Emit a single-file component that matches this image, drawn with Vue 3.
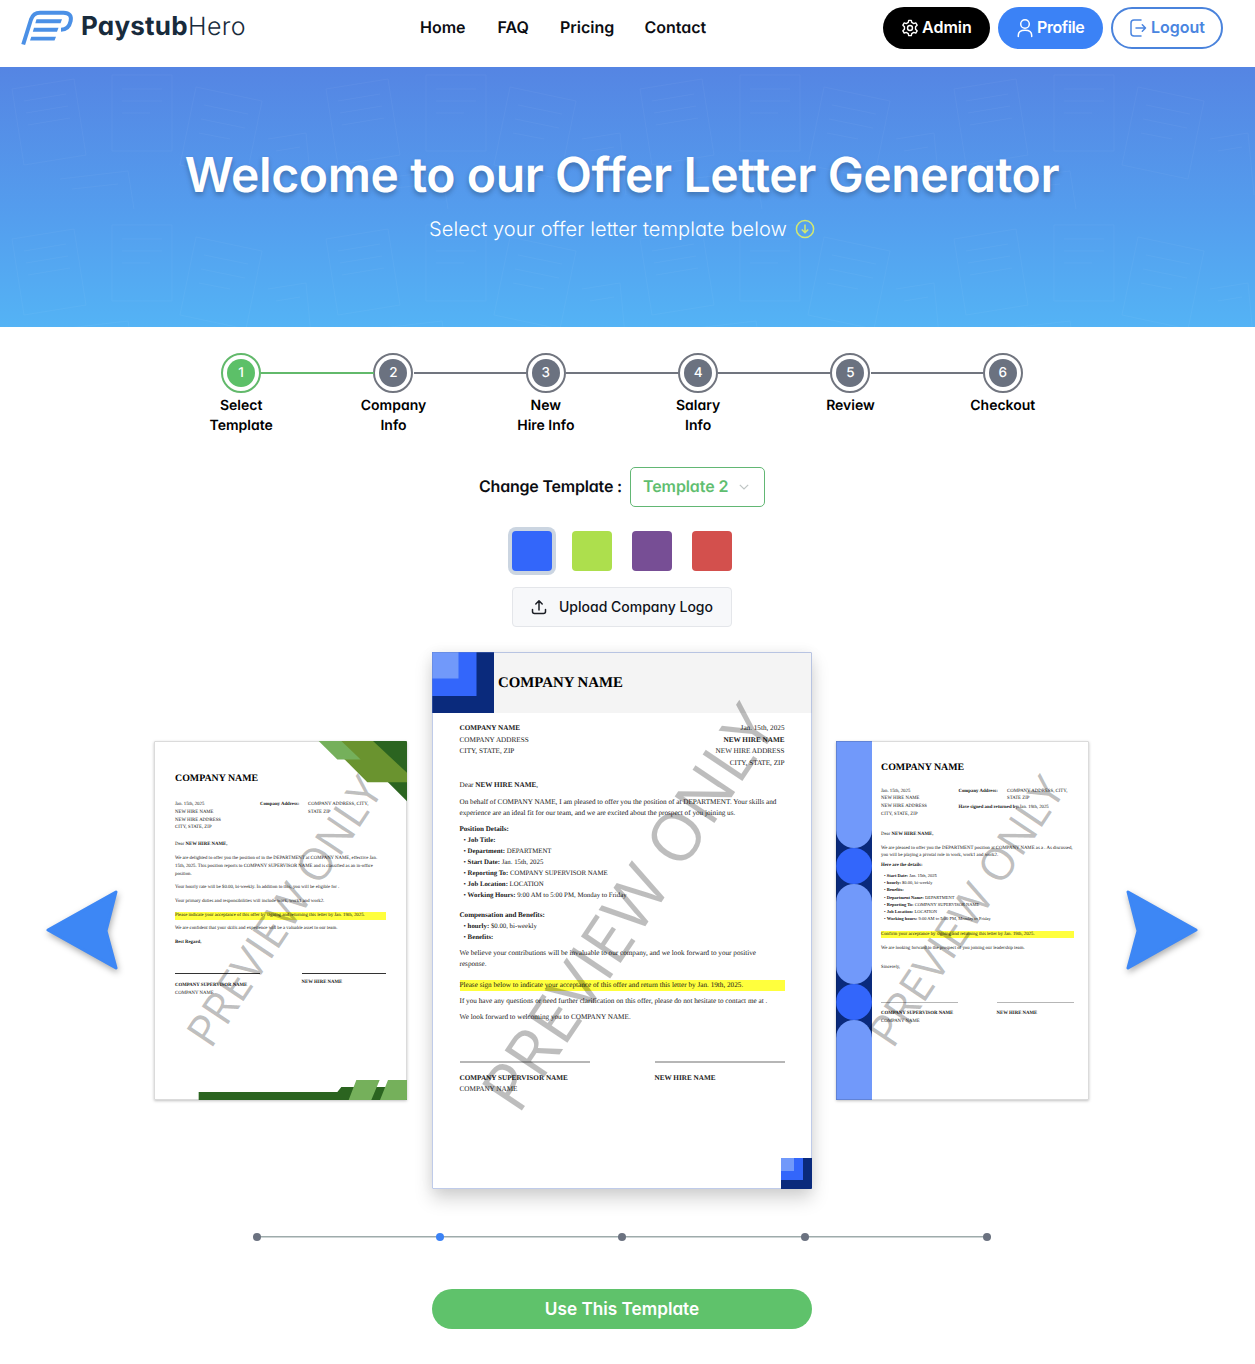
<script setup>
const nav = ['Home', 'FAQ', 'Pricing', 'Contact']
const steps = [['Select', 'Template'], ['Company', 'Info'], ['New', 'Hire Info'], ['Salary', 'Info'], ['Review'], ['Checkout']]
const swatches = ['blue', 'lime', 'purple', 'red']
const position = [
  ['Job Title:', ''],
  ['Department:', 'DEPARTMENT'],
  ['Start Date:', 'Jan. 15th, 2025'],
  ['Reporting To:', 'COMPANY SUPERVISOR NAME'],
  ['Job Location:', 'LOCATION'],
  ['Working Hours:', '9:00 AM to 5:00 PM, Monday to Friday'],
]
const benefits = [['hourly:', '$0.00, bi-weekly'], ['Benefits:', '']]
const details = [
  ['Start Date:', 'Jan. 15th, 2025'],
  ['hourly:', '$0.00, bi-weekly'],
  ['Benefits:', ''],
  ['Department Name:', 'DEPARTMENT'],
  ['Reporting To:', 'COMPANY SUPERVISOR NAME'],
  ['Job Location:', 'LOCATION'],
  ['Working hours:', '9:00 AM to 5:00 PM, Monday to Friday'],
]
</script>

<template>
  <div class="page">
    <header class="header">
      <div class="logo">
        <svg width="53" height="36" viewBox="0 0 53 36" fill="none" stroke="#4b90e6">
          <path d="M2.2 34.5 10 9.5Q12.3 2.7 19 2.7H42.5C48.5 2.7 50.8 6 49.6 11.2 48.5 16.500 45.500 19.800 40 19.800" stroke-width="4" />
          <path d="M15.500 9.300H41L39.500 13.300H14.300ZM13 17.800H37.500L36 21.800H11.800ZM10.300 26.800H35L33.500 30.500H9Z" fill="#4b90e6" stroke="none" />
        </svg>
        <span class="wordmark"><b>Paystub</b><i>Hero</i></span>
      </div>
      <nav class="nav"><a v-for="n in nav" :key="n" :class="n.toLowerCase()">{{ n }}</a></nav>
      <div class="account">
        <button class="pill admin">
          <svg width="18" height="18" viewBox="0 0 24 24" fill="none" stroke="currentColor" stroke-width="1.900" stroke-linejoin="round">
            <path d="M9.700 4.500 10.300 1.800H13.700L14.300 4.500 17 6.100 19.700 5.200 21.500 8.200 19.400 10.300V13.700L21.500 15.800 19.700 18.800 17 17.900 14.300 19.500 13.700 22.200H10.300L9.700 19.500 7 17.900 4.300 18.800 2.500 15.800 4.600 13.700V10.300L2.500 8.200 4.300 5.200 7 6.100Z" /><circle cx="12" cy="12" r="3.300" />
          </svg><span>Admin</span>
        </button>
        <button class="pill profile">
          <svg width="18" height="20" viewBox="0 0 18 20" fill="none" stroke="currentColor" stroke-width="1.500" stroke-linecap="round">
            <circle cx="9" cy="6" r="4.300" /><path d="M2.300 18.500V17.300C2.300 14 4.500 12.300 9 12.300S15.700 14 15.700 17.300V18.500" />
          </svg><span>Profile</span>
        </button>
        <button class="pill logout">
          <svg width="18" height="20" viewBox="0 0 18 20" fill="none" stroke="currentColor" stroke-width="1.500" stroke-linecap="round" stroke-linejoin="round">
            <path d="M12 2H5Q2 2 2 5V15Q2 18 5 18H12M7 10H16.500M13.300 6.800 16.500 10 13.300 13.200" />
          </svg><span>Logout</span>
        </button>
      </div>
    </header>

    <section class="hero">
      <svg class="papers" width="1255" height="260" fill="none" stroke="#fff">
        <defs>
          <pattern id="sheets" width="314" height="150" patternUnits="userSpaceOnUse">
            <path d="M12 22 74 12 86 88 24 98ZM24 34 66 27M26 46 68 39M28 58 70 51M112 8H172V84H112ZM122 22H162M122 34H162M122 46H150M196 20 262 34 246 112 180 98ZM204 38 248 47M201 52 245 61M199 66 230 72M60 112 128 104 134 142M72 122 118 117M268 72 306 66 312 128M276 84 300 80" />
          </pattern>
        </defs>
        <rect width="1255" height="260" fill="url(#sheets)" stroke="none" />
      </svg>
      <h1>Welcome to our Offer Letter Generator</h1>
      <p><span>Select your offer letter template below</span>
        <svg width="20" height="20" viewBox="0 0 20 20" fill="none" stroke="#d3e870" stroke-width="1.500">
          <circle cx="10" cy="10" r="8.600" /><path d="M10 5.500V13.500M6.800 10.500 10 13.700 13.200 10.500" />
        </svg>
      </p>
    </section>

    <main class="content">
      <ol class="steps">
        <li v-for="(s, i) in steps" :key="i" :class="{ active: i === 0 }">
          <div class="ring"><span>{{ i + 1 }}</span></div>
          <div v-for="w in s" :key="w" class="label">{{ w }}</div>
        </li>
      </ol>

      <div class="chooser">
        <span class="chooser-label">Change Template :</span>
        <div class="select"><span>Template 2</span>
          <svg width="10" height="6" viewBox="0 0 10 6" fill="none" stroke="#bfc5c4" stroke-width="1.200"><path d="M.8.8 5 5 9.200.8" /></svg>
        </div>
      </div>

      <div class="swatches"><i v-for="(c, i) in swatches" :key="c" :class="[c, { selected: i === 0 }]"></i></div>

      <button class="upload">
        <svg width="16" height="16" viewBox="0 0 16 16" fill="none" stroke="#1c1f26" stroke-width="1.500" stroke-linecap="round" stroke-linejoin="round">
          <path d="M8 11V2M4.800 5 8 1.800 11.200 5M1.500 10.500V12.500Q1.500 14.500 3.500 14.500H12.500Q14.500 14.500 14.500 12.500V10.500" />
        </svg><span>Upload Company Logo</span>
      </button>

      <div class="carousel">
        <svg class="arrow prev" width="72" height="80" viewBox="0 0 72 80"><path d="M2 40 70 2 60 41 70 78Z" fill="#3d87f5" stroke="#3d87f5" stroke-width="3" stroke-linejoin="round" /></svg>

        <article class="letter side green">
          <svg class="decor" viewBox="0 0 759 1072" preserveAspectRatio="none">
            <path d="M560 0H759V180L702 123Z" fill="#2b6420" />
            <path d="M560 0H657L759 95V123H640L572 55Z" fill="#6a932f" />
            <path d="M494 0H562L620 55H550Z" fill="#75b05b" />
            <path d="M134 1048H550L562 1033H759V1072H134Z" fill="#2b6420" />
            <path d="M607 1012H677L652 1072H584ZM702 1012H759V1072H678Z" fill="#75b05b" />
          </svg>
          <h2>COMPANY NAME</h2>
          <div class="info">
            <div class="who">Jan. 15th, 2025<br>NEW HIRE NAME<br>NEW HIRE ADDRESS<br>CITY, STATE, ZIP</div>
            <b class="key">Company Address:</b>
            <div class="value">COMPANY ADDRESS, CITY,<br>STATE ZIP</div>
          </div>
          <p class="dear">Dear <b>NEW HIRE NAME,</b></p>
          <p class="intro">We are delighted to offer you the position of in the DEPARTMENT at COMPANY NAME, effective Jan.<br>15th, 2025. This position reports to COMPANY SUPERVISOR NAME and is classified as an in-office<br>position.</p>
          <p>Your hourly rate will be $0.00, bi-weekly. In addition to this, you will be eligible for .</p>
          <p>Your primary duties and responsibilities will include work, work1 and work2.</p>
          <p class="mark">Please indicate your acceptance of this offer by signing and returning this letter by Jan. 19th, 2025.</p>
          <p>We are confident that your skills and experience will be a valuable asset to our team.</p>
          <p><b>Best Regard,</b></p>
          <div class="signs">
            <div><b>COMPANY SUPERVISOR NAME</b><span>COMPANY NAME</span></div>
            <div><b>NEW HIRE NAME</b></div>
          </div>
          <div class="watermark">PREVIEW ONLY</div>
        </article>

        <article class="letter main">
          <div class="band">
            <svg width="62" height="61" viewBox="0 0 62 61"><path d="M0 0H62V61H0Z" fill="#0a2a7c" /><path d="M0 0H44.500V44H0Z" fill="#3366fb" /><path d="M0 0H26.500V26.500H0Z" fill="#7199fa" /></svg>
            <h2>COMPANY NAME</h2>
          </div>
          <div class="body">
            <div class="parties">
              <div><b>COMPANY NAME</b><br>COMPANY ADDRESS<br>CITY, STATE, ZIP</div>
              <div class="to">Jan. 15th, 2025<br><b>NEW HIRE NAME</b><br>NEW HIRE ADDRESS<br>CITY, STATE, ZIP</div>
            </div>
            <p class="dear">Dear <b>NEW HIRE NAME</b>,</p>
            <p class="intro">On behalf of COMPANY NAME, I am pleased to offer you the position of at DEPARTMENT. Your skills and<br>experience are an ideal fit for our team, and we are excited about the prospect of you joining us.</p>
            <h3>Position Details:</h3>
            <ul><li v-for="d in position" :key="d[0]">• <b>{{ d[0] }}</b> {{ d[1] }}</li></ul>
            <h3 class="comp">Compensation and Benefits:</h3>
            <ul><li v-for="d in benefits" :key="d[0]">• <b>{{ d[0] }}</b> {{ d[1] }}</li></ul>
            <p class="believe">We believe your contributions will be invaluable to our company, and we look forward to your positive<br>response.</p>
            <p class="mark">Please sign below to indicate your acceptance of this offer and return this letter by Jan. 19th, 2025.</p>
            <p>If you have any questions or need further clarification on this offer, please do not hesitate to contact me at .</p>
            <p>We look forward to welcoming you to COMPANY NAME.</p>
            <div class="signs">
              <div><b>COMPANY SUPERVISOR NAME</b><span>COMPANY NAME</span></div>
              <div><b>NEW HIRE NAME</b></div>
            </div>
          </div>
          <svg class="corner" width="31" height="31" viewBox="0 0 31 31"><path d="M0 0H31V31H0Z" fill="#0a2a7c" /><path d="M0 0H22V22H0Z" fill="#3366fb" /><path d="M0 0H13V13H0Z" fill="#7199fa" /></svg>
          <div class="watermark">PREVIEW ONLY</div>
        </article>

        <article class="letter side strip">
          <div class="ribbon"><i class="first"></i><i class="dot"></i><i class="middle"></i><i class="dot"></i><i class="last"></i></div>
          <div class="body">
            <h2>COMPANY NAME</h2>
            <div class="info">
              <div class="who">Jan. 15th, 2025<br>NEW HIRE NAME<br>NEW HIRE ADDRESS<br>CITY, STATE, ZIP</div>
              <div class="meta">
                <div class="pair"><b class="key">Company Address:</b><div>COMPANY ADDRESS, CITY,<br>STATE ZIP</div></div>
                <div class="signed"><b>Have signed and returned by:</b>Jan. 19th, 2025</div>
              </div>
            </div>
            <p class="dear">Dear <b>NEW HIRE NAME,</b></p>
            <p class="intro">We are pleased to offer you the DEPARTMENT position at COMPANY NAME as a . As discussed,<br>you will be playing a pivotal role in work, work1 and work2.</p>
            <p class="here"><b>Here are the details:</b></p>
            <ul><li v-for="d in details" :key="d[0]">• <b>{{ d[0] }}</b> {{ d[1] }}</li></ul>
            <p class="mark">Confirm your acceptance by signing and returning this letter by Jan. 19th, 2025.</p>
            <p class="look">We are looking forward to the prospect of you joining our leadership team.</p>
            <p class="sincerely">Sincerely,</p>
            <div class="signs">
              <div><b>COMPANY SUPERVISOR NAME</b><span>COMPANY NAME</span></div>
              <div><b>NEW HIRE NAME</b></div>
            </div>
          </div>
          <div class="watermark">PREVIEW ONLY</div>
        </article>

        <svg class="arrow next" width="72" height="80" viewBox="0 0 72 80"><path d="M70 40 2 2 12 41 2 78Z" fill="#3d87f5" stroke="#3d87f5" stroke-width="3" stroke-linejoin="round" /></svg>
      </div>

      <div class="track"><i v-for="n in 5" :key="n" :class="{ current: n === 2 }"></i></div>
      <button class="use">Use This Template</button>
    </main>
  </div>
</template>

<style>
body { margin: 0; background: #fff; }
</style>

<style scoped>
* { box-sizing: border-box; }
.page { width: 1255px; height: 1364px; overflow: hidden; background: #fff; color: #0b0d12; font-family: Inter, "Open Sans", sans-serif; font-feature-settings: "cv11" 1; text-rendering: geometricPrecision; }
button { font: inherit; border: 0; padding: 0; margin: 0; font-feature-settings: inherit; white-space: nowrap; }
h1, h2, h3, p, ul, ol { margin: 0; padding: 0; list-style: none; }
svg { display: block; flex: none; }

.header { height: 67px; display: flex; align-items: flex-start; }
.logo { display: flex; width: 420px; padding: 10px 0 0 21px; }
.wordmark { display: flex; margin-left: 7px; font-size: 25px; line-height: 34px; color: #182b3c; white-space: nowrap; }
.wordmark b { width: 107px; font-size: 26px; font-weight: 700; letter-spacing: .2px; }
.wordmark i { font-style: normal; font-weight: 300; letter-spacing: .4px; }
.nav { display: flex; width: 463px; font-size: 16px; font-weight: 600; line-height: 55px; white-space: nowrap; }
.home { width: 77.500px; }
.faq { width: 62.500px; }
.pricing { width: 84.500px; }
.account { display: flex; gap: 8px; margin-top: 7px; }
.pill { height: 42px; border-radius: 21px; display: flex; align-items: center; gap: 3px; font-size: 16px; font-weight: 600; color: #fff; }
.pill span { padding-bottom: 2px; }
.admin { width: 107px; background: #000; padding-left: 18px; }
.profile { width: 105px; background: #3b82f6; padding-left: 18px; letter-spacing: -.4px; }
.logout { width: 112px; background: #fff; color: #4a85e0; border: 2px solid #4a83dc; padding-left: 16px; gap: 4px; }

.hero { position: relative; height: 260px; background: linear-gradient(#5585e3, #549eee 58%, #54b3f5); color: #fff; display: flex; flex-direction: column; align-items: center; padding: 78px 11px 0 0; }
.papers { position: absolute; inset: 0; opacity: .035; }
.hero h1 { position: relative; font-size: 48px; line-height: 60px; font-weight: 600; letter-spacing: -.38px; white-space: nowrap; text-shadow: 0 3px 5px rgba(0, 0, 0, .25); }
.hero p { position: relative; display: flex; align-items: center; gap: 8px; margin-top: 9px; font-size: 20px; line-height: 30px; white-space: nowrap; font-weight: 300; letter-spacing: .1px; }

.content { width: 1244px; display: flex; flex-direction: column; align-items: center; }
.steps { display: flex; width: 914px; height: 114px; padding-top: 26px; }
.steps li { flex: 1; position: relative; text-align: center; }
.steps li + li::before { content: ""; position: absolute; top: 19px; right: calc(50% + 20px); width: 112.300px; height: 2px; background: #71757f; }
.steps li:nth-child(2)::before { background: #62b96b; }
.ring { width: 40px; height: 40px; margin: 0 auto 3px; border: 2px solid #71757f; border-radius: 50%; display: grid; place-items: center; }
.ring span { width: 28px; height: 28px; border-radius: 50%; background: #6b7280; color: #fff; font-size: 13.500px; line-height: 28px; font-weight: 500; }
.active .ring { border-color: #62b96b; }
.active .ring span { background: #5cc068; }
.label { font-size: 14px; line-height: 20px; font-weight: 600; color: #000; }

.chooser { width: 286px; height: 40px; margin-top: 26px; display: flex; align-items: center; justify-content: space-between; font-size: 16px; font-weight: 600; white-space: nowrap; }
.chooser-label { letter-spacing: -.2px; padding-bottom: 2px; }
.select { width: 135px; height: 40px; border: 1px solid #62b774; border-radius: 5px; display: flex; align-items: center; justify-content: space-between; padding: 0 15px 0 12px; color: #5fbe70; }
.select span { letter-spacing: -.1px; padding-bottom: 2px; }
.swatches { display: flex; gap: 20px; margin-top: 24px; }
.swatches i { width: 40px; height: 40px; border-radius: 4px; }
.blue { background: #3366fa; }
.lime { background: #addf4d; }
.purple { background: #774e95; }
.red { background: #d3504d; }
.swatches .selected { box-shadow: 0 0 0 4px #cbd5e1; }
.upload { width: 220px; height: 40px; margin-top: 16px; background: #f7f8fa; border: 1px solid #e4e6ea; border-radius: 4px; display: flex; align-items: center; padding-left: 18px; gap: 12px; font-size: 14px; font-weight: 500; color: #11141a; }
.upload span { padding-bottom: 2px; }

.carousel { display: flex; align-items: center; width: 1152px; height: 537px; margin: 25px 0 0; }
.arrow { margin-top: 18px; filter: drop-shadow(1px 3px 3px rgba(0, 0, 0, .32)); }
.prev { margin-right: 36px; }
.next { margin-left: 37px; }
.letter { position: relative; flex: none; background: #fff; overflow: hidden; font-family: "Liberation Serif", serif; color: #171717; white-space: nowrap; border-radius: 1px; }
.main { width: 380px; height: 537px; margin: 0 24px 0 25px; font-size: 7.200px; line-height: 11px; outline: 1px solid rgba(95, 125, 200, .4); outline-offset: -1px; box-shadow: 0 10px 18px rgba(0, 0, 0, .17), 0 0 14px rgba(0, 0, 0, .06); }
.side { width: 253px; height: 359px; font-size: 4.810px; line-height: 8px; outline: 1px solid rgba(0, 0, 0, .14); outline-offset: -1px; box-shadow: 0 1px 3px rgba(0, 0, 0, .25); }
.watermark { position: absolute; left: 50%; top: 50%; font-family: "Open Sans", "Noto Sans", sans-serif; font-size: 67px; line-height: 1; color: rgba(0, 0, 0, .26); transform: translate(-50%, -50%) translate(5.500px, -14px) rotate(-56.200deg); }
.side .watermark { font-size: 44.600px; transform: translate(-50%, -50%) translate(3.500px, -9.500px) rotate(-56.200deg); }
.mark { background: #ffff3d; }
.signs { display: flex; }
.signs b, .signs span { display: block; }

.band { height: 61px; background: #f4f4f4; display: flex; align-items: center; gap: 4px; }
.band h2 { font-size: 14.850px; color: #000; padding-top: 1px; }
.main .body { padding: 10px 27.500px 0; }
.parties { display: flex; justify-content: space-between; line-height: 11.500px; }
.to { text-align: right; }
.main .dear { margin-top: 10.500px; }
.main p { margin-top: 5px; }
.main .intro { margin-top: 6px; }
.main h3 { font-size: 7.080px; margin-top: 5px; }
.main ul { margin-top: 1.800px; padding-left: 4px; line-height: 10.900px; font-size: 6.820px; }
.main .comp { margin-top: 7.800px; }
.main .believe { margin-top: 3.900px; }
.main .mark { margin-top: 9.500px; }
.main .signs { margin-top: 38.700px; gap: 65px; line-height: 11.500px; }
.main .signs div { width: 130px; border-top: 2px solid #b6b6b6; padding-top: 9.600px; }
.corner { position: absolute; right: 0; bottom: 0; }

.side h2 { font-size: 9.900px; line-height: 12px; color: #000; }
.decor { position: absolute; inset: 0; width: 100%; height: 100%; }
.green { padding: 31.700px 21px 0; }
.green .info { display: flex; margin-top: 16.500px; line-height: 7.700px; }
.green .who { width: 85px; }
.green .key { width: 48px; }
.green p { margin-top: 5.700px; }
.green .dear { margin-top: 8.500px; }
.green .intro { margin-top: 6.200px; }
.green .signs { margin-top: 26px; gap: 42px; }
.green .signs div { width: 84.500px; border-top: 1.500px solid #333; padding-top: 4.500px; }
.green .signs div:first-child { padding-top: 7.500px; }

.strip { display: flex; }
.ribbon { width: 36px; background: #0a2a7c; display: flex; flex-direction: column; flex: none; }
.ribbon i { background: #7199fa; border-radius: 18px; height: 36px; flex: none; }
.ribbon .first { height: 107px; border-radius: 0 0 18px 18px; }
.ribbon .dot { background: #3366fb; }
.ribbon .middle { height: 100px; }
.ribbon .last { height: 80px; border-radius: 18px 18px 0 0; }
.strip .body { width: 202px; padding: 20.700px 0 0 9px; }
.strip .info { display: flex; margin-top: 14px; line-height: 7.700px; }
.strip .who { width: 77.500px; }
.pair { display: flex; }
.strip .key { width: 48.500px; }
.signed { margin-top: 1px; }
.strip .dear { margin-top: 12px; }
.strip .intro { margin-top: 6px; line-height: 7.400px; }
.strip .here { margin-top: 3px; }
.strip ul { margin-top: 1.800px; padding-left: 3px; line-height: 7.150px; font-size: 4.500px; }
.strip .mark { margin-top: 8.600px; height: 7.500px; }
.strip .look { margin-top: 6.700px; }
.strip .sincerely { margin-top: 11.300px; }
.strip .signs { margin-top: 30px; gap: 38.500px; line-height: 7.500px; }
.strip .signs div { width: 77px; border-top: 1px solid #b6b6b6; padding-top: 7px; }

.track { width: 738px; height: 8px; margin-top: 44px; display: flex; justify-content: space-between; background: linear-gradient(#9eabab, #9eabab) 0 3px / 100% 1.500px no-repeat; }
.track i { width: 8px; height: 8px; border-radius: 50%; background: #6b7280; }
.track .current { background: #3b82f6; }
.use { width: 380px; height: 40px; margin-top: 48px; padding-bottom: 2px; border-radius: 20px; background: #5fc26b; color: #fff; font-size: 17.200px; font-weight: 600; }
</style>
